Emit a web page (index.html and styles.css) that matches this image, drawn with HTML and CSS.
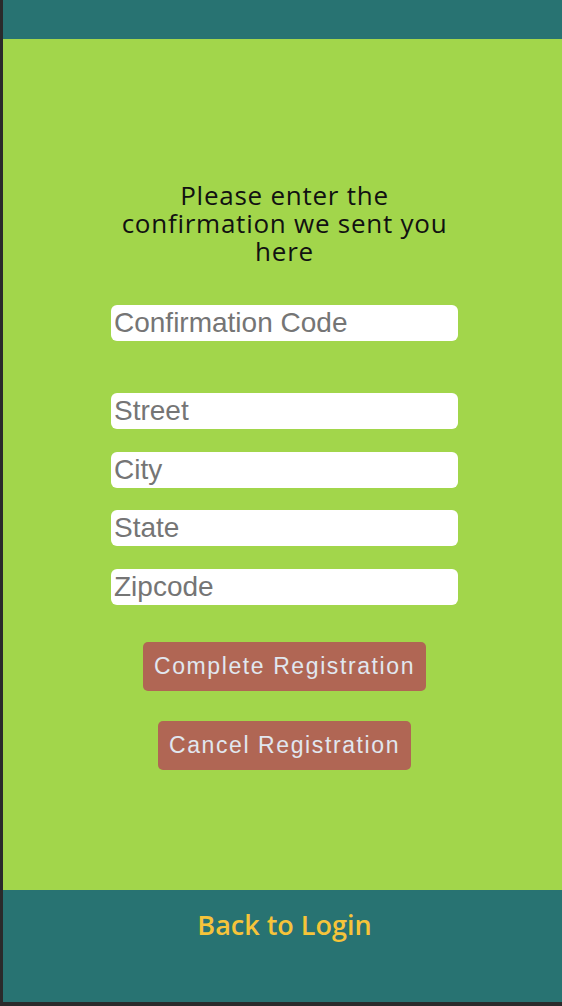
FILE: index.html
```html
<!DOCTYPE html>
<html lang="en">
<head>
<meta charset="utf-8">
<title>Confirm Registration</title>
<link rel="stylesheet" href="styles.css">
</head>
<body>
<div class="app">
  <header class="topbar"></header>
  <main class="main">
    <h1 class="title">Please enter the confirmation we sent you here</h1>
    <form class="form">
      <input class="field field-code" type="text" placeholder="Confirmation Code">
      <div class="address">
        <input class="field" type="text" placeholder="Street">
        <input class="field" type="text" placeholder="City">
        <input class="field" type="text" placeholder="State">
        <input class="field" type="text" placeholder="Zipcode">
      </div>
      <div class="actions">
        <button class="btn" type="button">Complete Registration</button>
        <button class="btn" type="button">Cancel Registration</button>
      </div>
    </form>
  </main>
  <footer class="footer">
    <a class="back" href="#">Back to Login</a>
  </footer>
</div>
</body>
</html>
```
FILE: styles.css
```css
html, body {
  margin: 0;
  padding: 0;
  background: #2a2a2b;
  overflow: hidden;
  height: 100%;
}
.app {
  margin-left: 3px;
  width: 563px;
  height: 1002px;
  display: flex;
  flex-direction: column;
  background: #a2d64b;
}
.topbar {
  height: 39px;
  background: #287372;
  flex: none;
}
.main {
  flex: 1;
  display: flex;
  flex-direction: column;
  align-items: center;
  padding-top: 142px;
}
.title {
  width: 347px;
  margin: 0;
  font-family: "Open Sans", sans-serif;
  font-weight: 400;
  font-size: 26px;
  line-height: 28px;
  letter-spacing: 0.75px;
  text-align: center;
  color: #111;
}
.form {
  width: 347px;
  margin-top: 40px;
  display: flex;
  flex-direction: column;
}
.field {
  box-sizing: border-box;
  width: 347px;
  height: 36px;
  border: none;
  border-radius: 6px;
  background: #fff;
  padding: 0 3px;
  font-family: "Liberation Sans", Arial, sans-serif;
  font-size: 28px;
  color: #333;
  outline: none;
}
.field::placeholder {
  color: #757575;
}
.address {
  margin-top: 52px;
  display: flex;
  flex-direction: column;
  gap: 22.6px;
}
.actions {
  margin-top: 37px;
  display: flex;
  flex-direction: column;
  align-items: center;
  gap: 30px;
}
.btn {
  border: none;
  border-radius: 5px;
  background: #b06654;
  color: #e1e7ef;
  font-family: "Liberation Sans", Arial, sans-serif;
  font-size: 23px;
  letter-spacing: 1.6px;
  line-height: 29px;
  padding: 10px 11px;
  cursor: pointer;
}
.footer {
  height: 112px;
  flex: none;
  background: #287372;
  display: flex;
  justify-content: center;
  align-items: flex-start;
  box-sizing: border-box;
}
.back {
  margin-top: 17px;
  font-family: "Open Sans", sans-serif;
  font-weight: 600;
  font-size: 27px;
  line-height: 36px;
  letter-spacing: 0;
  color: #f6c43a;
  text-decoration: none;
}
```
